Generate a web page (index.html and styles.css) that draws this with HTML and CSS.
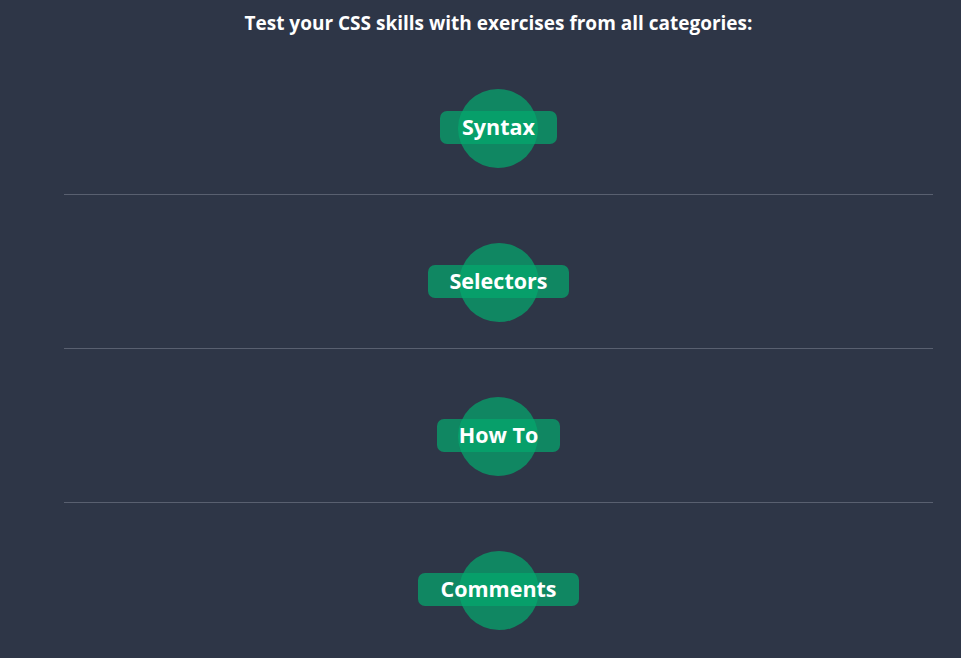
FILE: index.html
```html
<!DOCTYPE html>
<html>
<head>
<meta charset="utf-8">
<link rel="stylesheet" href="styles.css">
</head>
<body>
<div class="wrap">
  <h2 class="title">Test your CSS skills with exercises from all categories:</h2>
  <div class="cat"><a class="pill"><span class="label">Syntax</span></a></div>
  <div class="cat"><a class="pill"><span class="label">Selectors</span></a></div>
  <div class="cat"><a class="pill"><span class="label">How To</span></a></div>
  <div class="cat"><a class="pill"><span class="label">Comments</span></a></div>
</div>
</body>
</html>
```
FILE: styles.css
```css
html, body {
  margin: 0;
  padding: 0;
  background: #2e3647;
  overflow: hidden;
}
body {
  font-family: "Open Sans", Lato, sans-serif;
  color: #fff;
}
.wrap {
  margin-left: 64px;
  width: 869px;
}
.title {
  margin: 0;
  height: 41px;
  padding-top: 5px;
  box-sizing: border-box;
  display: flex;
  align-items: center;
  justify-content: center;
  font-size: 19px;
  font-weight: 700;
}
.cat {
  display: flex;
  justify-content: center;
  align-items: center;
  height: 80px;
  padding: 47px 0 26px;
  border-bottom: 1px solid #596070;
}
.cat:last-child {
  border-bottom: none;
}
.pill {
  position: relative;
  isolation: isolate;
  display: block;
  height: 33px;
  line-height: 32px;
  padding: 0 22px;
  margin-top: -2px;
  border-radius: 7px;
  background: rgba(4, 170, 109, 0.7);
  font-size: 21.5px;
  font-weight: 700;
  color: #fff;
}
.pill::before {
  content: "";
  position: absolute;
  left: 50%;
  top: 50%;
  width: 80px;
  height: 79px;
  margin-left: -40px;
  margin-top: -38px;
  border-radius: 50%;
  background: rgba(4, 170, 109, 0.7);
  z-index: 0;
}
.label {
  position: relative;
  z-index: 1;
}
```
